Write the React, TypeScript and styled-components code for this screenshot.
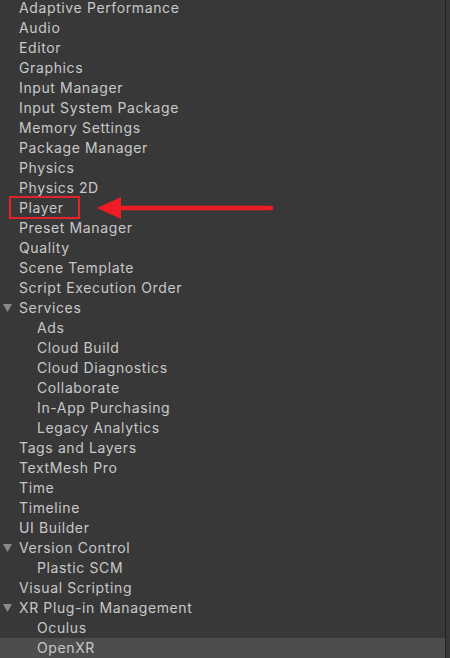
import React from "react";
import styled, { createGlobalStyle } from "styled-components";

const Global = createGlobalStyle`
  html, body { margin: 0; padding: 0; background: #383838; }
  body { font-family: Inter, "Noto Sans", sans-serif; }
`;

const Frame = styled.div`
  width: 450px;
  height: 658px;
  display: flex;
  overflow: hidden;
  background: #383838;
`;

const List = styled.div`
  flex: 0 0 445px;
  display: flex;
  flex-direction: column;
  margin-top: -2px;
`;

const Divider = styled.div`
  flex: 0 0 1px;
  background: #232323;
`;

const Gutter = styled.div`
  flex: 1;
  background: #383838;
`;

const Row = styled.div<{ $level: number; $selected?: boolean }>`
  position: relative;
  box-sizing: border-box;
  height: 20px;
  flex: 0 0 20px;
  display: flex;
  align-items: center;
  padding-left: ${(p) => 19 + p.$level * 18}px;
  padding-bottom: 2px;
  background: ${(p) => (p.$selected ? "#4d4d4d" : "transparent")};
  color: #c8c8c8;
  font-size: 14px;
  letter-spacing: 0.62px;
  white-space: nowrap;
`;

const Caret = styled.svg`
  position: absolute;
  left: 3px;
  top: 6px;
  width: 9px;
  height: 8px;
`;

const Highlight = styled.div`
  position: absolute;
  left: 9px;
  top: -2px;
  width: 67px;
  height: 19px;
  border: 2px solid #e3222a;
`;

const Arrow = styled.svg`
  position: absolute;
  left: 95px;
  top: -2px;
  width: 180px;
  height: 24px;
`;

type Item = { label: string; level: number; open?: boolean; selected?: boolean; mark?: boolean };

const items: Item[] = [
  { label: "Adaptive Performance", level: 0 },
  { label: "Audio", level: 0 },
  { label: "Editor", level: 0 },
  { label: "Graphics", level: 0 },
  { label: "Input Manager", level: 0 },
  { label: "Input System Package", level: 0 },
  { label: "Memory Settings", level: 0 },
  { label: "Package Manager", level: 0 },
  { label: "Physics", level: 0 },
  { label: "Physics 2D", level: 0 },
  { label: "Player", level: 0, mark: true },
  { label: "Preset Manager", level: 0 },
  { label: "Quality", level: 0 },
  { label: "Scene Template", level: 0 },
  { label: "Script Execution Order", level: 0 },
  { label: "Services", level: 0, open: true },
  { label: "Ads", level: 1 },
  { label: "Cloud Build", level: 1 },
  { label: "Cloud Diagnostics", level: 1 },
  { label: "Collaborate", level: 1 },
  { label: "In-App Purchasing", level: 1 },
  { label: "Legacy Analytics", level: 1 },
  { label: "Tags and Layers", level: 0 },
  { label: "TextMesh Pro", level: 0 },
  { label: "Time", level: 0 },
  { label: "Timeline", level: 0 },
  { label: "UI Builder", level: 0 },
  { label: "Version Control", level: 0, open: true },
  { label: "Plastic SCM", level: 1 },
  { label: "Visual Scripting", level: 0 },
  { label: "XR Plug-in Management", level: 0, open: true },
  { label: "Oculus", level: 1 },
  { label: "OpenXR", level: 1, selected: true },
];

export default function App() {
  return (
    <>
      <Global />
      <Frame>
        <List>
          {items.map((it) => (
            <Row key={it.label} $level={it.level} $selected={it.selected}>
              {it.open && (
                <Caret viewBox="0 0 9 8">
                  <polygon points="0,0 9,0 4.5,8" fill="#8a8a8a" />
                </Caret>
              )}
              {it.label}
              {it.mark && (
                <>
                  <Highlight />
                  <Arrow viewBox="0 0 180 24">
                    <line x1="24" y1="12" x2="176" y2="12" stroke="#ee1d25" strokeWidth="4.5" strokeLinecap="round" />
                    <polygon points="2,12 26,1 26,23" fill="#ee1d25" />
                  </Arrow>
                </>
              )}
            </Row>
          ))}
        </List>
        <Divider />
        <Gutter />
      </Frame>
    </>
  );
}
